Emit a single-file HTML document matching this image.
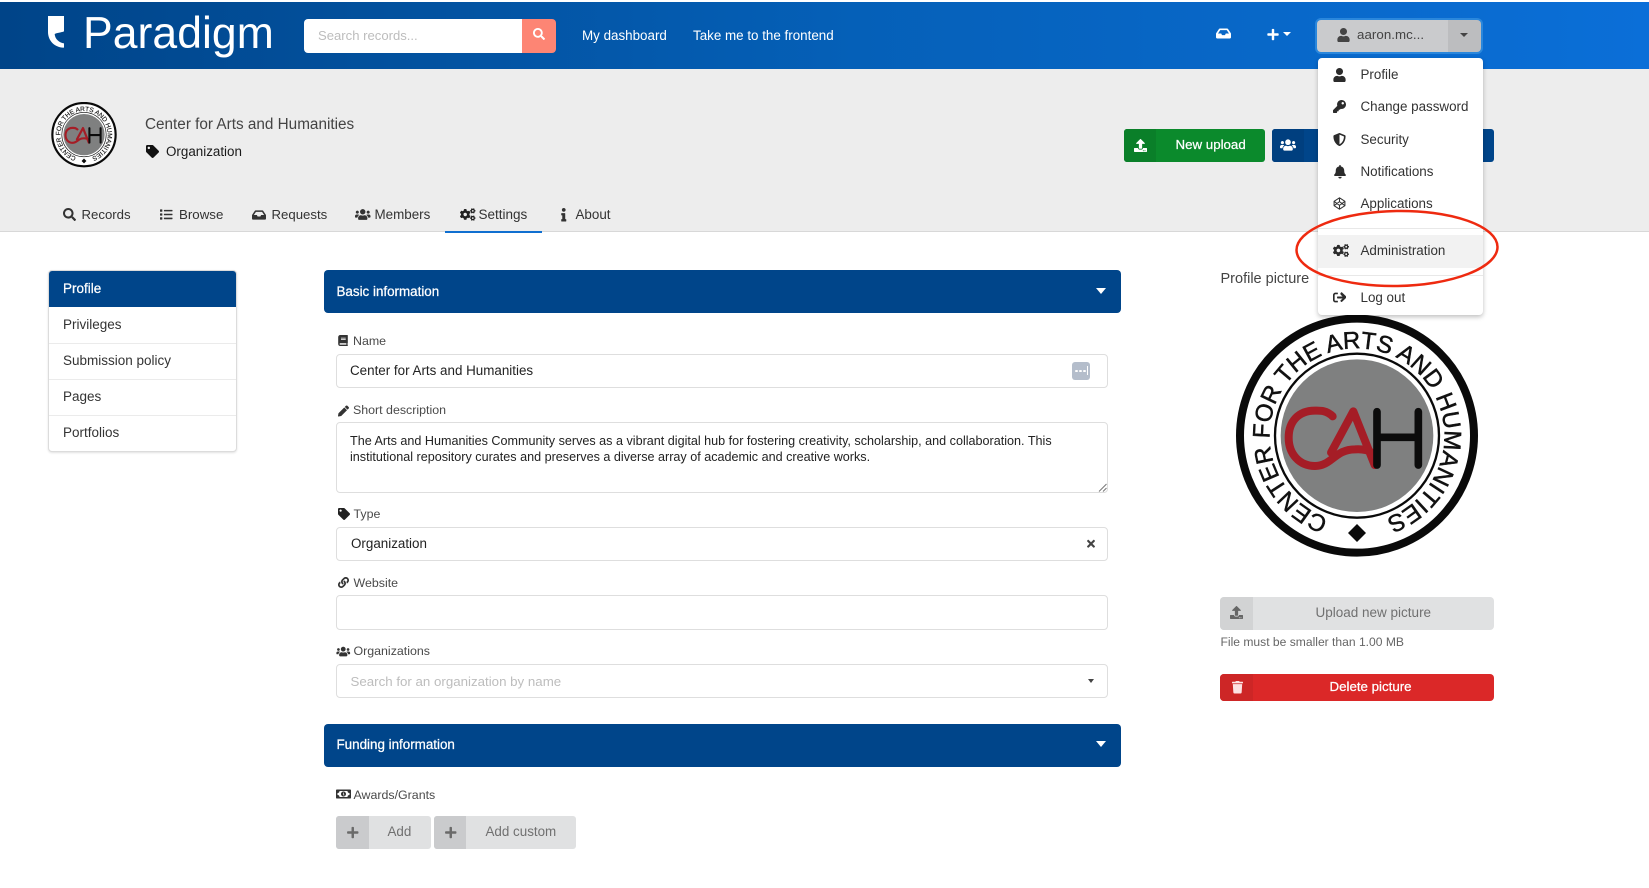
<!DOCTYPE html>
<html lang="en"><head><meta charset="utf-8"><title>Paradigm</title>
<style>
html,body{margin:0;padding:0;background:#fff}
body{position:relative;width:1649px;height:888px;overflow:hidden;font-family:"Liberation Sans",Arial,sans-serif;font-size:13.4px;color:#333}
.a{position:absolute;box-sizing:border-box}
.t{position:absolute;white-space:nowrap;line-height:20px;height:20px}
.m{-webkit-text-stroke:.25px currentColor}
svg.i{position:absolute;fill:currentColor;overflow:visible}
.inp{position:absolute;box-sizing:border-box;background:#fff;border:1px solid #dedede;border-radius:4px;left:336px;width:772px}
.lab{color:#4a4a4a;font-size:12.4px}
.caret{position:absolute;width:0;height:0;border-left:4px solid transparent;border-right:4px solid transparent;border-top:4.5px solid currentColor}
.bar{position:absolute;left:324px;width:797px;background:#00458a;border-radius:4px;height:43px}
.side{position:absolute;left:63px;color:#333;font-size:13.500px}
</style></head><body>
<svg width="0" height="0" style="position:absolute">
<symbol id="user" viewBox="0 0 448 512"><path d="M224 256c70.7 0 128-57.3 128-128S294.7 0 224 0 96 57.3 96 128s57.3 128 128 128zm89.6 32h-16.7c-22.2 10.2-46.9 16-72.9 16s-50.6-5.8-72.9-16h-16.7C60.2 288 0 348.2 0 422.4V464c0 26.5 21.5 48 48 48h352c26.5 0 48-21.5 48-48v-41.6c0-74.2-60.2-134.4-134.4-134.4z"/></symbol>
<symbol id="search" viewBox="0 0 512 512"><path d="M505 442.7L405.3 343c-4.5-4.5-10.6-7-17-7H372c27.6-35.3 44-79.7 44-128C416 93.1 322.9 0 208 0S0 93.1 0 208s93.1 208 208 208c48.3 0 92.7-16.4 128-44v16.3c0 6.4 2.5 12.5 7 17l99.7 99.7c9.4 9.4 24.6 9.4 33.9 0l28.3-28.3c9.4-9.4 9.4-24.6.1-34zM208 336c-70.7 0-128-57.2-128-128 0-70.7 57.2-128 128-128 70.7 0 128 57.2 128 128 0 70.7-57.2 128-128 128z"/></symbol>
<symbol id="plus" viewBox="0 0 448 512"><path d="M416 208H272V64c0-17.67-14.33-32-32-32h-32c-17.67 0-32 14.33-32 32v144H32c-17.67 0-32 14.33-32 32v32c0 17.67 14.33 32 32 32h144v144c0 17.67 14.33 32 32 32h32c17.67 0 32-14.33 32-32V304h144c17.67 0 32-14.33 32-32v-32c0-17.67-14.33-32-32-32z"/></symbol>
<symbol id="times" viewBox="0 0 352 512"><path d="M242.72 256l100.07-100.07c12.28-12.28 12.28-32.19 0-44.48l-22.24-22.24c-12.28-12.28-32.19-12.28-44.48 0L176 189.28 75.93 89.21c-12.28-12.28-32.19-12.28-44.48 0L9.21 111.45c-12.28 12.28-12.28 32.19 0 44.48L109.28 256 9.21 356.07c-12.28 12.28-12.28 32.19 0 44.48l22.24 22.24c12.28 12.28 32.2 12.28 44.48 0L176 322.72l100.07 100.07c12.28 12.28 32.2 12.28 44.48 0l22.24-22.24c12.28-12.28 12.28-32.19 0-44.48L242.72 256z"/></symbol>
<symbol id="tag" viewBox="0 0 512 512"><path d="M0 252.118V48C0 21.49 21.49 0 48 0h204.118a48 48 0 0 1 33.941 14.059l211.882 211.882c18.745 18.745 18.745 49.137 0 67.882L293.823 497.941c-18.745 18.745-49.137 18.745-67.882 0L14.059 286.059A48 48 0 0 1 0 252.118zM112 64c-26.51 0-48 21.49-48 48s21.49 48 48 48 48-21.49 48-48-21.49-48-48-48z"/></symbol>
<symbol id="upload" viewBox="0 0 512 512"><path d="M296 384h-80c-13.3 0-24-10.7-24-24V192h-87.7c-17.8 0-26.7-21.5-14.1-34.1L242.3 5.7c7.5-7.5 19.8-7.5 27.3 0l152.2 152.2c12.6 12.6 3.7 34.1-14.1 34.1H320v168c0 13.3-10.7 24-24 24zm216-8v112c0 13.3-10.7 24-24 24H24c-13.3 0-24-10.7-24-24V376c0-13.3 10.7-24 24-24h136v8c0 30.9 25.1 56 56 56h80c30.9 0 56-25.1 56-56v-8h136c13.3 0 24 10.7 24 24zm-124 88c0-11-9-20-20-20s-20 9-20 20 9 20 20 20 20-9 20-20zm64 0c0-11-9-20-20-20s-20 9-20 20 9 20 20 20 20-9 20-20z"/></symbol>
<symbol id="trash" viewBox="0 0 448 512"><path d="M432 32H312l-9.4-18.7A24 24 0 0 0 281.1 0H166.8a23.72 23.72 0 0 0-21.4 13.3L136 32H16A16 16 0 0 0 0 48v32a16 16 0 0 0 16 16h416a16 16 0 0 0 16-16V48a16 16 0 0 0-16-16zM53.2 467a48 48 0 0 0 47.9 45h245.8a48 48 0 0 0 47.9-45L416 128H32z"/></symbol>
<symbol id="bell" viewBox="0 0 448 512"><path d="M224 512c35.32 0 63.97-28.65 63.97-64H160.03c0 35.35 28.65 64 63.97 64zm215.39-149.71c-19.32-20.76-55.47-51.99-55.47-154.29 0-77.7-54.48-139.9-127.94-155.16V32c0-17.67-14.32-32-31.98-32s-31.98 14.33-31.98 32v20.84C118.56 68.1 64.08 130.3 64.08 208c0 102.3-36.15 133.53-55.47 154.29-6 6.45-8.66 14.16-8.61 21.71.11 16.4 12.98 32 32.1 32h383.8c19.12 0 32-15.6 32.1-32 .05-7.55-2.61-15.27-8.61-21.71z"/></symbol>
<symbol id="key" viewBox="0 0 512 512"><path d="M512 176.001C512 273.203 433.202 352 336 352c-11.22 0-22.19-1.062-32.827-3.069l-24.012 27.014A23.999 23.999 0 0 1 261.223 384H224v40c0 13.255-10.745 24-24 24h-40v40c0 13.255-10.745 24-24 24H24c-13.255 0-24-10.745-24-24v-78.059c0-6.365 2.529-12.47 7.029-16.971l161.802-161.802C163.108 213.814 160 195.271 160 176 160 78.798 238.797.001 335.999 0 433.488-.001 512 78.511 512 176.001zM336 128c0 26.51 21.49 48 48 48s48-21.49 48-48-21.49-48-48-48-48 21.49-48 48z"/></symbol>
<symbol id="shield" viewBox="0 0 512 512"><path d="M466.5 83.7l-192-80a48.15 48.15 0 0 0-36.9 0l-192 80C27.7 91.1 16 108.6 16 128c0 198.5 114.5 335.7 221.5 380.3 11.8 4.9 25.1 4.9 36.9 0C360.1 472.6 496 349.3 496 128c0-19.4-11.7-36.9-29.5-44.3zM256.1 446.3l-.1-381 175.9 73.3c-3.3 151.4-82.1 261.1-175.8 307.7z"/></symbol>
<symbol id="signout" viewBox="0 0 512 512"><path d="M180 448H96c-53 0-96-43-96-96V160c0-53 43-96 96-96h84c6.6 0 12 5.4 12 12v40c0 6.6-5.4 12-12 12H96c-17.7 0-32 14.3-32 32v192c0 17.7 14.3 32 32 32h84c6.6 0 12 5.4 12 12v40c0 6.6-5.4 12-12 12zm117.9-303.1l77.6 71.1H184c-13.3 0-24 10.7-24 24v32c0 13.3 10.7 24 24 24h191.5l-77.6 71.1c-10.3 9.4-10.9 25.5-1.3 35.6l21.9 23c9.3 9.8 24.8 10.2 34.6.9l176-168c9.8-9.3 10.1-24.9 0-34.7l-176-168c-9.8-9.3-25.3-8.9-34.6.9l-21.9 23c-9.6 10.1-9 26.2 1.3 35.6z"/></symbol>
<symbol id="inbox" viewBox="0 0 576 512"><path d="M567.938 243.908L462.25 85.374A48.003 48.003 0 0 0 422.311 64H153.689a48 48 0 0 0-39.938 21.374L8.062 243.908A47.994 47.994 0 0 0 0 270.533V400c0 26.51 21.49 48 48 48h480c26.51 0 48-21.49 48-48V270.533a47.994 47.994 0 0 0-8.062-26.625zM162.252 128h251.497l85.333 128H376l-32 64H232l-32-64H76.918l85.334-128z"/></symbol>
<symbol id="users" viewBox="0 0 640 512"><path d="M96 224c35.3 0 64-28.7 64-64s-28.7-64-64-64-64 28.7-64 64 28.7 64 64 64zm448 0c35.3 0 64-28.7 64-64s-28.7-64-64-64-64 28.7-64 64 28.7 64 64 64zm32 32h-64c-17.6 0-33.5 7.1-45.1 18.6 40.3 22.1 68.9 62 75.1 109.4h66c17.7 0 32-14.3 32-32v-32c0-35.3-28.7-64-64-64zm-256 0c61.9 0 112-50.1 112-112S381.9 32 320 32 208 82.1 208 144s50.1 112 112 112zm76.8 32h-8.3c-20.8 10-43.9 16-68.5 16s-47.6-6-68.5-16h-8.3C179.6 288 128 339.6 128 403.2V432c0 26.5 21.5 48 48 48h288c26.5 0 48-21.5 48-48v-28.8c0-63.6-51.6-115.2-115.2-115.2zm-223.7-13.4C161.5 263.1 145.6 256 128 256H64c-35.3 0-64 28.7-64 64v32c0 17.7 14.3 32 32 32h65.9c6.3-47.4 34.9-87.3 75.2-109.4z"/></symbol>
<symbol id="pencil" viewBox="0 0 512 512"><path d="M497.9 142.1l-46.1 46.1c-4.7 4.7-12.3 4.7-17 0l-111-111c-4.7-4.7-4.7-12.3 0-17l46.1-46.1c18.7-18.7 49.1-18.7 67.9 0l60.1 60.1c18.8 18.7 18.8 49.1 0 67.9zM284.2 99.8L21.6 362.4.4 483.9c-2.9 16.4 11.4 30.6 27.8 27.8l121.5-21.3 262.6-262.6c4.7-4.7 4.7-12.3 0-17l-111-111c-4.8-4.7-12.4-4.7-17.1 0z"/></symbol>
<symbol id="link" viewBox="0 0 512 512"><path d="M326.612 185.391c59.747 59.809 58.927 155.698.36 214.59-.11.12-.24.25-.36.37l-67.2 67.2c-59.27 59.27-155.699 59.262-214.96 0-59.27-59.26-59.27-155.7 0-214.96l37.106-37.106c9.84-9.84 26.786-3.3 27.294 10.606.648 17.722 3.826 35.527 9.69 52.721 1.986 5.822.567 12.262-3.783 16.612l-13.087 13.087c-28.026 28.026-28.905 73.66-1.155 101.96 28.024 28.579 74.086 28.749 102.325.51l67.2-67.19c28.191-28.191 28.073-73.757 0-101.83-3.701-3.694-7.429-6.564-10.341-8.569a16.037 16.037 0 0 1-6.947-12.606c-.396-10.567 3.348-21.456 11.698-29.806l21.054-21.055c5.521-5.521 14.182-6.199 20.584-1.731a152.482 152.482 0 0 1 20.522 17.197zM467.547 44.449c-59.261-59.262-155.69-59.27-214.96 0l-67.2 67.2c-.12.12-.25.25-.36.37-58.566 58.892-59.387 154.781.36 214.59a152.454 152.454 0 0 0 20.521 17.196c6.402 4.468 15.064 3.789 20.584-1.731l21.054-21.055c8.35-8.35 12.094-19.239 11.698-29.806a16.037 16.037 0 0 0-6.947-12.606c-2.912-2.005-6.64-4.875-10.341-8.569-28.073-28.073-28.191-73.639 0-101.83l67.2-67.19c28.239-28.239 74.3-28.069 102.325.51 27.75 28.3 26.872 73.934-1.155 101.96l-13.087 13.087c-4.35 4.35-5.769 10.79-3.783 16.612 5.864 17.194 9.042 34.999 9.69 52.721.509 13.906 17.454 20.446 27.294 10.606l37.106-37.106c59.271-59.259 59.271-155.699.001-214.959z"/></symbol>
<symbol id="book" viewBox="0 0 448 512"><path d="M448 360V24c0-13.3-10.7-24-24-24H96C43 0 0 43 0 96v320c0 53 43 96 96 96h328c13.3 0 24-10.7 24-24v-16c0-7.5-3.5-14.3-8.9-18.7-4.2-15.4-4.2-59.3 0-74.7 5.4-4.3 8.9-11.1 8.9-18.6zM128 134c0-3.3 2.7-6 6-6h212c3.3 0 6 2.7 6 6v20c0 3.3-2.7 6-6 6H134c-3.3 0-6-2.7-6-6v-20zm0 64c0-3.3 2.7-6 6-6h212c3.3 0 6 2.7 6 6v20c0 3.3-2.7 6-6 6H134c-3.3 0-6-2.7-6-6v-20zm253.4 250H96c-17.7 0-32-14.3-32-32 0-17.6 14.4-32 32-32h285.4c-1.9 17.1-1.9 46.9 0 64z"/></symbol>
<symbol id="cogs" viewBox="0 0 640 512"><path d="M512.1 191l-8.2 14.3c-3 5.3-9.4 7.5-15.1 5.4-11.8-4.4-22.6-10.7-32.1-18.6-4.6-3.8-5.8-10.5-2.8-15.7l8.2-14.3c-6.9-8-12.3-17.3-15.9-27.4h-16.5c-6 0-11.2-4.3-12.2-10.3-2-12-2.1-24.6 0-37.1 1-6 6.2-10.4 12.2-10.4h16.5c3.6-10.1 9-19.4 15.9-27.4l-8.2-14.3c-3-5.2-1.9-11.9 2.8-15.7 9.5-7.9 20.4-14.2 32.1-18.6 5.7-2.1 12.1.1 15.1 5.4l8.2 14.3c10.5-1.9 21.2-1.9 31.7 0L552 6.3c3-5.3 9.4-7.5 15.1-5.4 11.8 4.4 22.6 10.7 32.1 18.6 4.6 3.8 5.8 10.5 2.8 15.7l-8.2 14.3c6.9 8 12.3 17.3 15.9 27.4h16.5c6 0 11.2 4.3 12.2 10.3 2 12 2.1 24.6 0 37.1-1 6-6.2 10.4-12.2 10.4h-16.5c-3.6 10.1-9 19.4-15.9 27.4l8.2 14.3c3 5.2 1.9 11.9-2.8 15.7-9.5 7.9-20.4 14.2-32.1 18.6-5.7 2.1-12.1-.1-15.1-5.4l-8.2-14.3c-10.4 1.9-21.2 1.9-31.7 0zm-10.5-58.8c38.5 29.6 82.4-14.3 52.8-52.8-38.5-29.7-82.4 14.3-52.8 52.8zM386.3 286.1l33.7 16.8c10.1 5.8 14.5 18.1 10.5 29.1-8.9 24.2-26.4 46.4-42.6 65.8-7.4 8.9-20.2 11.1-30.3 5.3l-29.1-16.8c-16 13.7-34.6 24.6-54.9 31.7v33.6c0 11.6-8.3 21.6-19.7 23.6-24.6 4.2-50.4 4.4-75.9 0-11.5-2-20-11.9-20-23.6V418c-20.3-7.2-38.9-18-54.9-31.7L74 403c-10 5.8-22.9 3.6-30.3-5.3-16.2-19.4-33.3-41.6-42.2-65.7-4-10.9.4-23.2 10.5-29.1l33.3-16.8c-3.9-20.9-3.9-42.4 0-63.4L12 205.8c-10.1-5.8-14.6-18.1-10.5-29 8.9-24.2 26-46.4 42.2-65.8 7.4-8.9 20.2-11.1 30.3-5.3l29.1 16.8c16-13.7 34.6-24.6 54.9-31.7V57.1c0-11.5 8.2-21.5 19.6-23.5 24.6-4.2 50.5-4.4 76-.1 11.5 2 20 11.9 20 23.6v33.6c20.3 7.2 38.9 18 54.9 31.7l29.1-16.8c10-5.8 22.9-3.6 30.3 5.3 16.2 19.4 33.2 41.6 42.1 65.8 4 10.9.1 23.2-10 29.1l-33.7 16.8c3.9 21 3.9 42.5 0 63.5zm-117.6 21.1c59.2-77-28.7-164.9-105.7-105.7-59.2 77 28.7 164.9 105.7 105.7zm243.4 182.7l-8.2 14.3c-3 5.3-9.4 7.5-15.1 5.4-11.8-4.4-22.6-10.7-32.1-18.6-4.6-3.8-5.8-10.5-2.8-15.7l8.2-14.3c-6.9-8-12.3-17.3-15.9-27.4h-16.5c-6 0-11.2-4.3-12.2-10.3-2-12-2.1-24.6 0-37.1 1-6 6.2-10.4 12.2-10.4h16.5c3.6-10.1 9-19.4 15.9-27.4l-8.2-14.3c-3-5.2-1.9-11.9 2.8-15.7 9.5-7.9 20.4-14.2 32.1-18.6 5.7-2.1 12.1.1 15.1 5.4l8.2 14.3c10.5-1.9 21.2-1.9 31.7 0l8.2-14.3c3-5.3 9.4-7.5 15.1-5.4 11.8 4.4 22.6 10.7 32.1 18.6 4.6 3.8 5.8 10.5 2.8 15.7l-8.2 14.3c6.9 8 12.3 17.3 15.9 27.4h16.5c6 0 11.2 4.3 12.2 10.3 2 12 2.1 24.6 0 37.1-1 6-6.2 10.4-12.2 10.4h-16.5c-3.6 10.1-9 19.4-15.9 27.4l8.2 14.3c3 5.2 1.9 11.9-2.8 15.7-9.5 7.9-20.4 14.2-32.1 18.6-5.7 2.1-12.1-.1-15.1-5.4l-8.2-14.3c-10.4 1.9-21.2 1.9-31.7 0zM501.6 431c38.5 29.6 82.4-14.3 52.8-52.8-38.5-29.6-82.4 14.3-52.8 52.8z"/></symbol>
<symbol id="list" viewBox="0 0 512 512"><path d="M80 368H16a16 16 0 0 0-16 16v64a16 16 0 0 0 16 16h64a16 16 0 0 0 16-16v-64a16 16 0 0 0-16-16zm0-320H16A16 16 0 0 0 0 64v64a16 16 0 0 0 16 16h64a16 16 0 0 0 16-16V64a16 16 0 0 0-16-16zm0 160H16a16 16 0 0 0-16 16v64a16 16 0 0 0 16 16h64a16 16 0 0 0 16-16v-64a16 16 0 0 0-16-16zm416 176H176a16 16 0 0 0-16 16v32a16 16 0 0 0 16 16h320a16 16 0 0 0 16-16v-32a16 16 0 0 0-16-16zm0-320H176a16 16 0 0 0-16 16v32a16 16 0 0 0 16 16h320a16 16 0 0 0 16-16V80a16 16 0 0 0-16-16zm0 160H176a16 16 0 0 0-16 16v32a16 16 0 0 0 16 16h320a16 16 0 0 0 16-16v-32a16 16 0 0 0-16-16z"/></symbol>
<symbol id="info" viewBox="0 0 192 512"><path d="M20 424.229h20V279.771H20c-11.046 0-20-8.954-20-20V212c0-11.046 8.954-20 20-20h112c11.046 0 20 8.954 20 20v212.229h20c11.046 0 20 8.954 20 20V492c0 11.046-8.954 20-20 20H20c-11.046 0-20-8.954-20-20v-47.771c0-11.046 8.954-20 20-20zM96 0C56.235 0 24 32.235 24 72s32.235 72 72 72 72-32.235 72-72S135.764 0 96 0z"/></symbol>
<symbol id="codepen" viewBox="0 0 24 24"><path fill="none" stroke="currentColor" stroke-width="1.900" stroke-linejoin="round" d="M12 1.500 22 8v8L12 22.500 2 16V8zM12 1.500V8.500M2 8l10 7.500L22 8M2 16l10-7.500L22 16M12 15.500V22.500"/></symbol>
<symbol id="money" viewBox="0 0 30 20"><path fill-rule="evenodd" d="M1.5 1h27A1.5 1.5 0 0 1 30 2.500v15a1.500 1.500 0 0 1-1.500 1.500h-27A1.500 1.500 0 0 1 0 17.500v-15A1.500 1.500 0 0 1 1.500 1zM7 4a4 4 0 0 1-4 4v4a4 4 0 0 1 4 4h16a4 4 0 0 1 4-4V8a4 4 0 0 1-4-4zM15 5c2.800 0 5 2.200 5 5s-2.200 5-5 5-5-2.200-5-5 2.200-5 5-5zM14 7.500v1h.9v3H14v1h3v-1h-1v-4z"/></symbol>
</svg>

<!-- header -->
<div class="a" style="left:0;top:2px;width:1649px;height:67px;background:linear-gradient(to right,#004488 0%,#0560b8 52%,#0b6fd8 100%)"></div>
<svg class="a" style="left:44px;top:12px;width:30px;height:40px" viewBox="0 0 90 120"><path fill="#fff" d="M12 12H60V58C50 62 38 62 32 66C33 82 46 92 60 94V107C32 107 12 86 12 60Z"/></svg>
<div class="t" style="left:83px;top:11.500px;font-size:44.500px;line-height:44px;height:44px;color:#fff;letter-spacing:.05px">Paradigm</div>
<div class="a" style="left:304px;top:19px;width:218px;height:34px;background:#fff;border-radius:4px 0 0 4px"></div>
<div class="a" style="left:522px;top:19px;width:34px;height:34px;background:#fd8574;border-radius:0 4px 4px 0"></div>
<svg class="i" style="left:533px;top:28px;width:12px;height:12px;color:#fff"><use href="#search"/></svg>
<div class="t" style="left:318px;top:26px;color:#bdbdbd;font-size:13.100px">Search records...</div>
<div class="t" style="left:582px;top:26px;color:#fff;font-size:13.400px">My dashboard</div>
<div class="t" style="left:693px;top:26px;color:#fff;font-size:13.400px">Take me to the frontend</div>
<svg class="i" style="left:1216px;top:26px;width:15px;height:15px;color:#fff"><use href="#inbox"/></svg>
<svg class="i" style="left:1267px;top:28px;width:12px;height:13px;color:#fff"><use href="#plus"/></svg>
<div class="caret" style="left:1283px;top:32px;color:#fff"></div>

<div class="a" style="left:1315px;top:18px;width:168px;height:36px;border-radius:6px;background:#2a87dc"></div>
<div class="a" style="left:1317px;top:20px;width:131px;height:32px;border-radius:4px 0 0 4px;background:#cacbcd"></div>
<div class="a" style="left:1448px;top:20px;width:33px;height:32px;border-radius:0 4px 4px 0;background:#bcbdbf"></div>
<svg class="i" style="left:1337px;top:28px;width:13px;height:14px;color:#444"><use href="#user"/></svg>
<div class="t" style="left:1357px;top:25px;color:#444;font-size:13.300px;letter-spacing:.05px">aaron.mc...</div>
<div class="caret" style="left:1460px;top:33px;color:#444"></div>

<!-- hero -->
<div class="a" style="left:0;top:69px;width:1649px;height:163px;background:#ededed;border-bottom:1px solid #d8d8d8"></div>
<svg class="a" style="left:51px;top:102px;width:66px;height:66px" viewBox="105 45 732 732">
<circle cx="471" cy="407" r="351" fill="#fff" stroke="#0a0a0a" stroke-width="24"/><circle cx="471" cy="407" r="246" fill="#fff" stroke="#0a0a0a" stroke-width="7"/><circle cx="471" cy="407" r="229" fill="#7f8080"/>
<path id="arcS" d="M386 655A262 262 0 1 1 556 655" fill="none"/>
<text font-family="Liberation Sans,sans-serif" font-size="72" fill="#111" stroke="#111" stroke-width="1.500"><textPath href="#arcS">CENTER FOR THE ARTS AND HUMANITIES</textPath></text>
<path d="M471 672l27 27-27 27-27-27z" fill="#0a0a0a"/>
<path d="M398 349C378 330 358 332 345 332C295 332 266 365 266 413C266 462 298 498 345 498C395 498 405 448 465 448C490 446 510 452 520 462M393 458L460 334L524 495" fill="none" stroke="#a51d26" stroke-width="24" stroke-linecap="round" stroke-linejoin="round"/>
<path d="M531 335V495M655 335V495M531 412H655" fill="none" stroke="#0c0c0c" stroke-width="23" stroke-linecap="round"/>
</svg>
<div class="t" style="left:145px;top:115px;font-size:15.300px;color:#444">Center for Arts and Humanities</div>
<svg class="i" style="left:146px;top:145px;width:13px;height:13px;color:#111"><use href="#tag"/></svg>
<div class="t" style="left:166px;top:142px;color:#1a1a1a;font-size:13.400px">Organization</div>

<div class="a" style="left:1124px;top:129px;width:141px;height:33px;background:#0b8a2c;border-radius:3px"></div>
<div class="a" style="left:1124px;top:129px;width:32px;height:33px;background:#0a7f29;border-radius:3px 0 0 3px"></div>
<svg class="i" style="left:1134px;top:139px;width:13px;height:13px;color:#fff"><use href="#upload"/></svg>
<div class="t m" style="left:1175.500px;top:135px;color:#fff;font-size:13.300px">New upload</div>
<div class="a" style="left:1272px;top:129px;width:222px;height:33px;background:#00458a;border-radius:3px"></div>
<div class="a" style="left:1272px;top:129px;width:32px;height:33px;background:#003f7f;border-radius:3px 0 0 3px"></div>
<svg class="i" style="left:1280px;top:138px;width:16px;height:14px;color:#fff"><use href="#users"/></svg>

<!-- tabs -->
<svg class="i" style="left:63px;top:208px;width:13px;height:13px;color:#333"><use href="#search"/></svg>
<div class="t" style="left:81.500px;top:205px;font-size:13.200px;color:#333">Records</div>
<svg class="i" style="left:160px;top:208px;width:12.500px;height:13px;color:#333"><use href="#list"/></svg>
<div class="t" style="left:179px;top:205px;font-size:13.300px;color:#333">Browse</div>
<svg class="i" style="left:252px;top:208px;width:14px;height:14px;color:#333"><use href="#inbox"/></svg>
<div class="t" style="left:271.500px;top:205px;font-size:13.200px;color:#333">Requests</div>
<svg class="i" style="left:355px;top:208px;width:15.500px;height:13px;color:#333"><use href="#users"/></svg>
<div class="t" style="left:374.500px;top:205px;font-size:13.400px;color:#333">Members</div>
<svg class="i" style="left:459.500px;top:207.500px;width:15.500px;height:13px;color:#222"><use href="#cogs"/></svg>
<div class="t" style="left:478.500px;top:205px;font-size:13.500px;color:#333">Settings</div>
<svg class="i" style="left:561px;top:208px;width:5.500px;height:13.500px;color:#333"><use href="#info"/></svg>
<div class="t" style="left:575.500px;top:205px;font-size:13.400px;color:#333">About</div>
<div class="a" style="left:445px;top:231px;width:97px;height:2px;background:#0f6fd0"></div>

<!-- sidebar -->
<div class="a" style="left:48px;top:270px;width:189px;height:182px;background:#fff;border:1px solid #dcdcdc;border-radius:4px;box-shadow:0 1px 2px rgba(0,0,0,.12)"></div>
<div class="a" style="left:49px;top:271px;width:187px;height:36px;background:#00458a;border-radius:3px 3px 0 0"></div>
<div class="a" style="left:49px;top:343px;width:187px;height:1px;background:#ebebeb"></div>
<div class="a" style="left:49px;top:379px;width:187px;height:1px;background:#ebebeb"></div>
<div class="a" style="left:49px;top:415px;width:187px;height:1px;background:#ebebeb"></div>
<div class="t m" style="left:63px;top:279px;color:#fff;font-size:13.500px">Profile</div>
<div class="t side" style="top:314.500px">Privileges</div>
<div class="t side" style="top:350.500px">Submission policy</div>
<div class="t side" style="top:386.500px">Pages</div>
<div class="t side" style="top:422.500px">Portfolios</div>

<!-- form -->
<div class="bar" style="top:270px"></div>
<div class="t m" style="left:336.500px;top:282px;color:#fff;font-size:13.400px">Basic information</div>
<div class="caret" style="left:1096px;top:288px;color:#fff;border-left-width:5.500px;border-right-width:5.500px;border-top-width:6px"></div>

<svg class="i" style="left:338px;top:335px;width:10px;height:11px;color:#333"><use href="#book"/></svg>
<div class="t lab" style="left:353px;top:331px">Name</div>
<div class="inp" style="top:354px;height:34px"></div>
<div class="t" style="left:350px;top:360.500px;color:#222;font-size:13.400px">Center for Arts and Humanities</div>
<div class="a" style="left:1071.500px;top:361.500px;width:18.500px;height:18.500px;background:#b4bdcb;border-radius:3px"></div>
<div class="a" style="left:1074.500px;top:370px;width:3px;height:2px;background:#fff;border-radius:50%"></div>
<div class="a" style="left:1078.500px;top:370px;width:3px;height:2px;background:#fff;border-radius:50%"></div>
<div class="a" style="left:1082.500px;top:370px;width:3px;height:2px;background:#fff;border-radius:50%"></div>
<div class="a" style="left:1087px;top:366px;width:1px;height:9px;background:#fff"></div>

<svg class="i" style="left:338px;top:404.500px;width:11px;height:12px;color:#333"><use href="#pencil"/></svg>
<div class="t lab" style="left:353px;top:400px">Short description</div>
<div class="inp" style="top:422px;height:71px"></div>
<div class="t" style="left:350px;color:#222;font-size:12.600px;line-height:16px;height:32px;white-space:nowrap;width:740px;top:433px">The Arts and Humanities Community serves as a vibrant digital hub for fostering creativity, scholarship, and collaboration. This<br>institutional repository curates and preserves a diverse array of academic and creative works.</div>
<svg class="a" style="left:1098px;top:483px;width:10px;height:10px" viewBox="0 0 10 10"><path d="M1 8.500 8.500 1M5 8.500 8.500 5" stroke="#777" stroke-width="1" fill="none"/></svg>

<svg class="i" style="left:338px;top:508px;width:12px;height:12px;color:#222"><use href="#tag"/></svg>
<div class="t lab" style="left:353.500px;top:504px">Type</div>
<div class="inp" style="top:527px;height:34px"></div>
<div class="t" style="left:351px;top:534px;color:#222;font-size:13.400px">Organization</div>
<svg class="i" style="left:1086.500px;top:538px;width:8px;height:11.500px;color:#444"><use href="#times"/></svg>

<svg class="i" style="left:337.500px;top:577px;width:11px;height:11px;color:#333"><use href="#link"/></svg>
<div class="t lab" style="left:353.500px;top:572.500px">Website</div>
<div class="inp" style="top:595px;height:35px"></div>

<svg class="i" style="left:336px;top:645.500px;width:14.500px;height:11px;color:#333"><use href="#users"/></svg>
<div class="t lab" style="left:353.500px;top:641px">Organizations</div>
<div class="inp" style="top:664px;height:34px"></div>
<div class="t" style="left:350.500px;top:671.500px;color:#bdbdbd;font-size:13.300px">Search for an organization by name</div>
<div class="caret" style="left:1087.500px;top:679px;color:#444;border-left-width:3.500px;border-right-width:3.500px;border-top-width:4px"></div>

<div class="bar" style="top:724px"></div>
<div class="t m" style="left:336.500px;top:734.500px;color:#fff;font-size:13.400px">Funding information</div>
<div class="caret" style="left:1096px;top:741px;color:#fff;border-left-width:5.500px;border-right-width:5.500px;border-top-width:6px"></div>

<svg class="i" style="left:336px;top:789px;width:15px;height:10px;color:#333"><use href="#money"/></svg>
<div class="t lab" style="left:353.500px;top:785px">Awards/Grants</div>

<div class="a" style="left:336px;top:816px;width:95px;height:33px;background:#e0e1e2;border-radius:3px"></div>
<div class="a" style="left:336px;top:816px;width:33px;height:33px;background:#cacbcd;border-radius:3px 0 0 3px"></div>
<svg class="i" style="left:346.500px;top:826px;width:11.500px;height:13px;color:#6a6a6a"><use href="#plus"/></svg>
<div class="t" style="left:387.500px;top:821.500px;color:#707070;font-size:13.400px">Add</div>
<div class="a" style="left:434px;top:816px;width:142px;height:33px;background:#e0e1e2;border-radius:3px"></div>
<div class="a" style="left:434px;top:816px;width:32px;height:33px;background:#cacbcd;border-radius:3px 0 0 3px"></div>
<svg class="i" style="left:444.500px;top:826px;width:11.500px;height:13px;color:#6a6a6a"><use href="#plus"/></svg>
<div class="t" style="left:485.500px;top:821.500px;color:#707070;font-size:13.400px">Add custom</div>

<!-- right column -->
<div class="t" style="left:1220.500px;top:268.500px;color:#444;font-size:14.500px">Profile picture</div>
<svg class="a" style="left:1200px;top:300px;width:300px;height:270px" viewBox="0 0 900 810">
<circle cx="471" cy="407" r="351" fill="#fff" stroke="#0a0a0a" stroke-width="24"/><circle cx="471" cy="407" r="246" fill="#fff" stroke="#0a0a0a" stroke-width="7"/><circle cx="471" cy="407" r="229" fill="#7f8080"/>
<path id="arcL" d="M386 655A262 262 0 1 1 556 655" fill="none"/>
<text font-family="Liberation Sans,sans-serif" font-size="72" fill="#111" stroke="#111" stroke-width="1.500"><textPath href="#arcL">CENTER FOR THE ARTS AND HUMANITIES</textPath></text>
<path d="M471 672l27 27-27 27-27-27z" fill="#0a0a0a"/>
<path d="M398 349C378 330 358 332 345 332C295 332 266 365 266 413C266 462 298 498 345 498C395 498 405 448 465 448C490 446 510 452 520 462M393 458L460 334L524 495" fill="none" stroke="#a51d26" stroke-width="24" stroke-linecap="round" stroke-linejoin="round"/>
<path d="M531 335V495M655 335V495M531 412H655" fill="none" stroke="#0c0c0c" stroke-width="23" stroke-linecap="round"/>
</svg>

<div class="a" style="left:1220px;top:597px;width:274px;height:33px;background:#e0e1e2;border-radius:4px"></div>
<div class="a" style="left:1220px;top:597px;width:33px;height:33px;background:#d2d3d4;border-radius:4px 0 0 4px"></div>
<svg class="i" style="left:1230px;top:606px;width:13px;height:13px;color:#666"><use href="#upload"/></svg>
<div class="t" style="left:1315.500px;top:602.500px;color:#707070;font-size:13.500px">Upload new picture</div>
<div class="t" style="left:1220.500px;top:632px;color:#666;font-size:12.100px">File must be smaller than 1.00 MB</div>
<div class="a" style="left:1220px;top:674px;width:274px;height:27px;background:#db2828;border-radius:4px"></div>
<div class="a" style="left:1220px;top:674px;width:33px;height:27px;background:#cd2626;border-radius:4px 0 0 4px"></div>
<svg class="i" style="left:1231.500px;top:681px;width:11px;height:12.500px;color:#fde3e3"><use href="#trash"/></svg>
<div class="t m" style="left:1329.500px;top:676.500px;color:#fff;font-size:13.300px">Delete picture</div>

<!-- dropdown -->
<div class="a" style="left:1318px;top:58px;width:165px;height:257px;background:#fff;border-radius:4px;box-shadow:0 2px 5px rgba(0,0,0,.25)"></div>
<svg class="i" style="left:1333px;top:68px;width:13px;height:14px;color:#2b2b2b"><use href="#user"/></svg>
<div class="t" style="left:1360.500px;top:64.500px;color:#333">Profile</div>
<svg class="i" style="left:1333px;top:100px;width:13px;height:13px;color:#2b2b2b"><use href="#key"/></svg>
<div class="t" style="left:1360.500px;top:96.500px;color:#333">Change password</div>
<svg class="i" style="left:1333px;top:133px;width:13px;height:13px;color:#2b2b2b"><use href="#shield"/></svg>
<div class="t" style="left:1360.500px;top:130px;color:#333">Security</div>
<svg class="i" style="left:1333.500px;top:164.500px;width:12px;height:13.500px;color:#2b2b2b"><use href="#bell"/></svg>
<div class="t" style="left:1360.500px;top:162px;color:#333">Notifications</div>
<svg class="i" style="left:1333px;top:196.500px;width:13px;height:13px;color:#333"><use href="#codepen"/></svg>
<div class="t" style="left:1360.500px;top:194px;color:#333">Applications</div>
<div class="a" style="left:1318px;top:227.500px;width:165px;height:1px;background:#e8e8e8"></div>
<div class="a" style="left:1318px;top:235px;width:165px;height:33px;background:#f2f2f2"></div>
<svg class="i" style="left:1332.500px;top:244px;width:16px;height:13px;color:#2b2b2b"><use href="#cogs"/></svg>
<div class="t" style="left:1360.500px;top:240.500px;color:#333">Administration</div>
<div class="a" style="left:1318px;top:274.500px;width:165px;height:1px;background:#e8e8e8"></div>
<svg class="i" style="left:1333px;top:291px;width:13px;height:13px;color:#2b2b2b"><use href="#signout"/></svg>
<div class="t" style="left:1360.500px;top:287.500px;color:#333">Log out</div>

<!-- red annotation -->
<svg class="a" style="left:1285px;top:200px;width:225px;height:100px" viewBox="0 0 225 100"><ellipse cx="112" cy="48.500" rx="100.500" ry="37.500" fill="none" stroke="#ee2a10" stroke-width="2.500" transform="rotate(-1 112 48.500)"/></svg>
</body></html>
